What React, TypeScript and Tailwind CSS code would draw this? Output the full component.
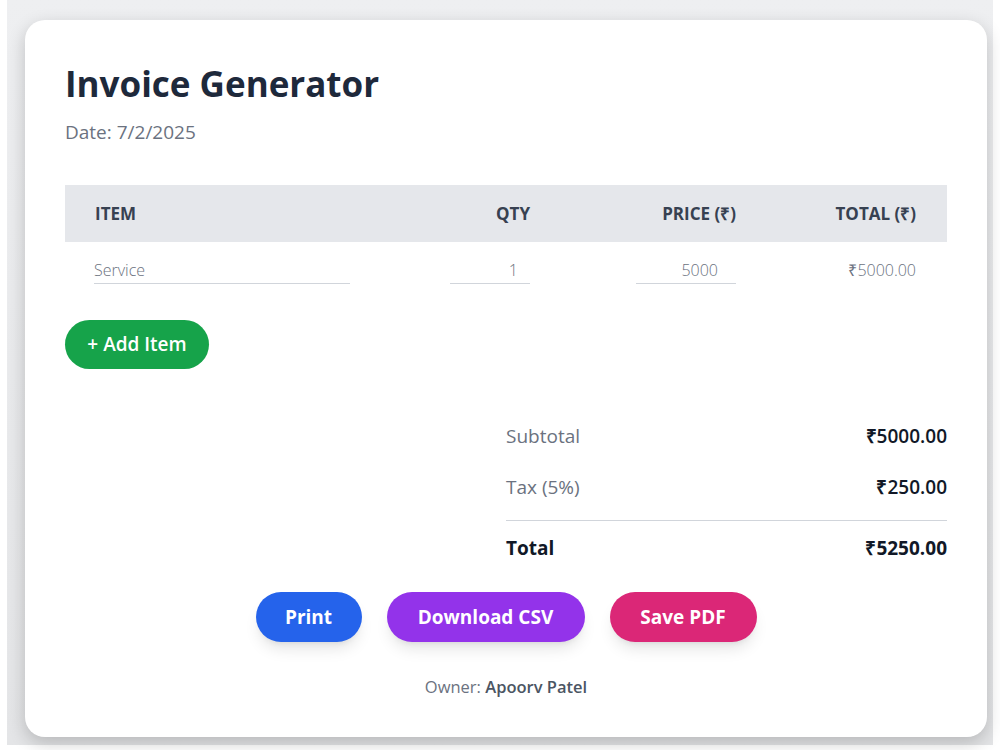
export default function App() {
  const cols = "grid grid-cols-[385px_110px_206px_181px]";

  return (
    <div className="h-[750px] w-[1000px] bg-white px-[7px] pb-[5px] font-['Open_Sans',sans-serif]">
      <div className="h-full bg-gradient-to-b from-[#eeeff1] to-[#e4e5e7] pt-[20px] pl-[18px] pr-[6px] pb-[8px]">
        <div className="h-[717px] w-[962px] rounded-[20px] bg-white px-[40px] pt-[40px] shadow-[0_6px_18px_rgba(0,0,0,0.2)]">
          <h1 className="text-[35px] leading-[48px] font-bold text-[#1e293b]">
            Invoice Generator
          </h1>
          <p className="mt-[11px] text-[19px] leading-[26px] text-[#6b7280]">Date: 7/2/2025</p>

          {/* items table */}
          <div className="mt-[40px]">
            <div className={`${cols} h-[57px] items-center bg-[#e5e7eb] text-[17px] font-bold uppercase text-[#374151]`}>
              <div className="pl-[30px]">Item</div>
              <div className="pr-[30px] text-right">Qty</div>
              <div className="pr-[30px] text-right">Price (₹)</div>
              <div className="pr-[31px] text-right">Total (₹)</div>
            </div>
            <div className={`${cols} h-[58px] items-center text-[16px] font-light text-[#6b7280]`}>
              <div className="pl-[29px]">
                <div className="w-[256px] border-b border-[#d1d5db] pb-[1px]">Service</div>
              </div>
              <div className="flex justify-end pr-[30px]">
                <div className="w-[80px] border-b border-[#d1d5db] pb-[1px] pr-[12px] text-right">1</div>
              </div>
              <div className="flex justify-end pr-[30px]">
                <div className="w-[100px] border-b border-[#d1d5db] pb-[1px] pr-[18px] text-right">5000</div>
              </div>
              <div className="pr-[31px] pb-[2px] text-right">₹5000.00</div>
            </div>
          </div>

          <button className="mt-[20px] flex h-[49px] w-[144px] items-center justify-center rounded-full bg-[#16a34a] text-[19px] font-semibold text-white">
            + Add Item
          </button>

          {/* summary */}
          <div className="mt-[50px] ml-auto w-[441px] text-[19px]">
            <div className="flex h-[34px] items-center justify-between">
              <span className="text-[#6b7280]">Subtotal</span>
              <span className="font-semibold text-[#111827]">₹5000.00</span>
            </div>
            <div className="mt-[17px] flex h-[34px] items-center justify-between">
              <span className="text-[#6b7280]">Tax (5%)</span>
              <span className="font-semibold text-[#111827]">₹250.00</span>
            </div>
            <div className="mt-[16px] border-t border-[#d1d5db]" />
            <div className="mt-[10px] flex h-[34px] items-center justify-between font-bold text-[#111827]">
              <span>Total</span>
              <span>₹5250.00</span>
            </div>
          </div>

          <div className="mt-[27px] flex justify-center gap-[25px]">
            <button className="h-[50px] w-[106px] rounded-full bg-[#2563eb] text-[19px] font-bold text-white shadow-lg">
              Print
            </button>
            <button className="h-[50px] w-[198px] rounded-full bg-[#9333ea] text-[19px] font-bold text-white shadow-lg">
              Download CSV
            </button>
            <button className="h-[50px] w-[147px] rounded-full bg-[#db2777] text-[19px] font-bold text-white shadow-lg">
              Save PDF
            </button>
          </div>

          <p className="mt-[33px] text-center text-[16.5px] text-[#6b7280]">
            Owner: <span className="font-semibold text-[#4b5563]">Apoorv Patel</span>
          </p>
        </div>
      </div>
    </div>
  );
}
